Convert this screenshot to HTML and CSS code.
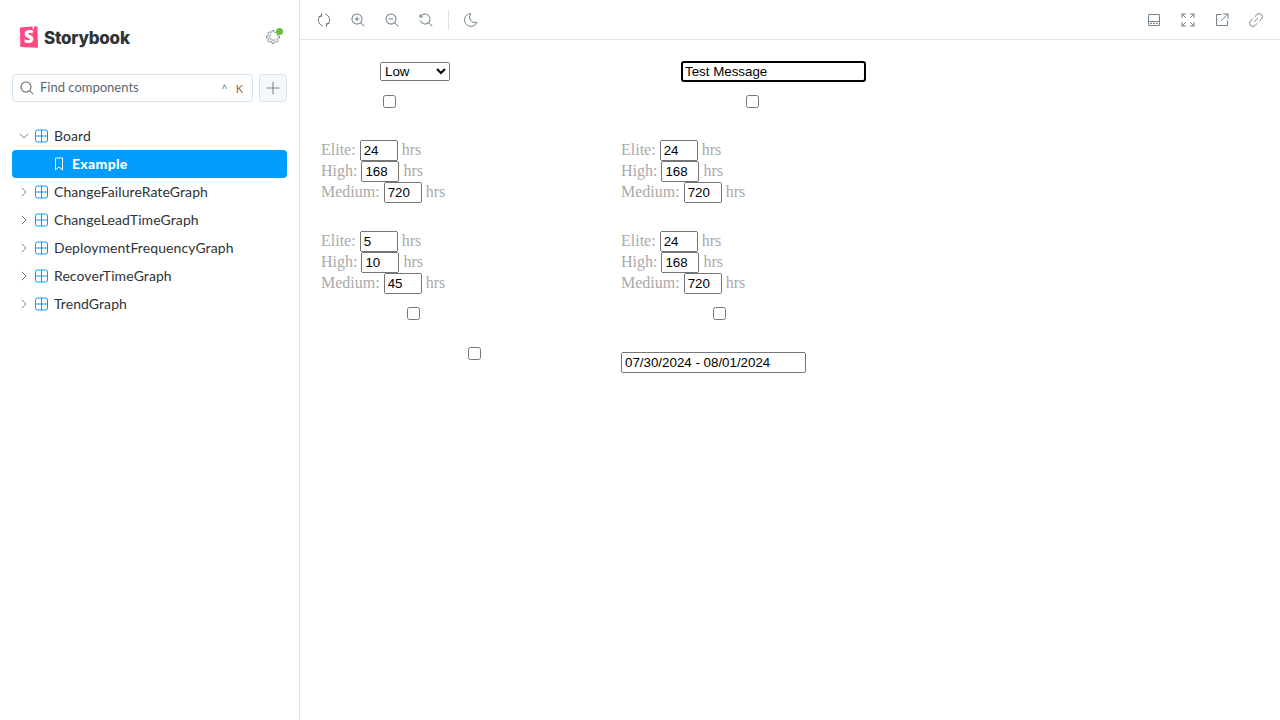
FILE: index.html
```html
<!DOCTYPE html>
<html>
<head>
<meta charset="utf-8"/>
<title>Board - Example</title>
<link rel="stylesheet" href="styles.css">
</head>
<body>
<div class="app">
  <aside class="sidebar">
    <div class="brand">
      <svg class="logo" width="18" height="22" viewBox="0 0 18 22">
        <path fill="#ff4785" d="M0 1.400 L12.600 .6 L12.500 3 L14 2.400 L14.200 .5 L17.400 .3 L18 20.800 Q18 21.800 17 21.800 L1.300 21 Q.4 21 .3 20.200 Z"/>
        <text x="9" y="17" class="logo-s">S</text>
      </svg>
      <span class="wordmark">Storybook</span>
      <span class="cog">
        <svg width="14" height="14" viewBox="0 0 14 14" fill="none" stroke="#73828c" stroke-width=".9" stroke-linejoin="round">
          <path d="M5.790 2.150 5.980 .58 8.020 .58 8.210 2.150 9.580 2.710 10.820 1.740 12.260 3.180 11.290 4.420 11.850 5.790 13.420 5.980 13.420 8.020 11.850 8.210 11.290 9.580 12.260 10.820 10.820 12.260 9.580 11.290 8.210 11.850 8.020 13.420 5.980 13.420 5.790 11.850 4.420 11.290 3.180 12.260 1.740 10.820 2.710 9.580 2.150 8.210 .58 8.020 .58 5.980 2.150 5.790 2.710 4.420 1.740 3.180 3.180 1.740 4.420 2.710Z"/>
          <path d="M5 4.500a3.200 3.200 0 1 0 4.500 4.500"/>
        </svg>
        <i class="dot"></i>
      </span>
    </div>

    <div class="search-row">
      <div class="search">
        <svg width="14" height="14" viewBox="0 0 14 14" fill="#5c6870"><path d="M9.544 10.206a5.500 5.500 0 11.662-.662.5.5 0 01.148.102l3 3a.5.5 0 01-.708.708l-3-3a.5.5 0 01-.102-.148zM10.500 6a4.500 4.500 0 10-9 0 4.500 4.500 0 009 0z"/></svg>
        <span class="search-text">Find components</span>
        <span class="keys"><span>^</span><span class="key-k">K</span></span>
      </div>
      <div class="add">
        <svg width="14" height="14" viewBox="0 0 14 14" fill="#73828c"><path d="M7 .5a.5.5 0 0 1 .5.5v5.500H13a.5.5 0 0 1 0 1H7.500V13a.5.5 0 0 1-1 0V7.500H1a.5.5 0 0 1 0-1h5.500V1A.5.5 0 0 1 7 .5z"/></svg>
      </div>
    </div>

    <ul class="tree">
      <li class="node">
        <svg class="chev" width="10" height="10" viewBox="0 0 10 10"><path d="M1 3l4 4 4-4"/></svg>
        <svg class="comp" width="14" height="14" viewBox="0 0 14 14"><rect x="1.500" y="1" width="12" height="12" rx="2"/><path d="M7.500 1v12M1.500 7h12"/></svg>
        <span>Board</span>
      </li>
      <li class="node story">
        <svg width="14" height="14" viewBox="0 0 14 14" fill="none" stroke="#fff"><path d="M3.500 1v12L7 10l3.500 3V1z" stroke-linejoin="round"/></svg>
        <span>Example</span>
      </li>
      <li class="node">
        <svg class="chev" width="10" height="10" viewBox="0 0 10 10"><path d="M3 1l4 4-4 4"/></svg>
        <svg class="comp" width="14" height="14" viewBox="0 0 14 14"><rect x="1.500" y="1" width="12" height="12" rx="2"/><path d="M7.500 1v12M1.500 7h12"/></svg>
        <span>ChangeFailureRateGraph</span>
      </li>
      <li class="node">
        <svg class="chev" width="10" height="10" viewBox="0 0 10 10"><path d="M3 1l4 4-4 4"/></svg>
        <svg class="comp" width="14" height="14" viewBox="0 0 14 14"><rect x="1.500" y="1" width="12" height="12" rx="2"/><path d="M7.500 1v12M1.500 7h12"/></svg>
        <span>ChangeLeadTimeGraph</span>
      </li>
      <li class="node">
        <svg class="chev" width="10" height="10" viewBox="0 0 10 10"><path d="M3 1l4 4-4 4"/></svg>
        <svg class="comp" width="14" height="14" viewBox="0 0 14 14"><rect x="1.500" y="1" width="12" height="12" rx="2"/><path d="M7.500 1v12M1.500 7h12"/></svg>
        <span>DeploymentFrequencyGraph</span>
      </li>
      <li class="node">
        <svg class="chev" width="10" height="10" viewBox="0 0 10 10"><path d="M3 1l4 4-4 4"/></svg>
        <svg class="comp" width="14" height="14" viewBox="0 0 14 14"><rect x="1.500" y="1" width="12" height="12" rx="2"/><path d="M7.500 1v12M1.500 7h12"/></svg>
        <span>RecoverTimeGraph</span>
      </li>
      <li class="node">
        <svg class="chev" width="10" height="10" viewBox="0 0 10 10"><path d="M3 1l4 4-4 4"/></svg>
        <svg class="comp" width="14" height="14" viewBox="0 0 14 14"><rect x="1.500" y="1" width="12" height="12" rx="2"/><path d="M7.500 1v12M1.500 7h12"/></svg>
        <span>TrendGraph</span>
      </li>
    </ul>
  </aside>

  <main class="main">
    <div class="toolbar">
      <div class="tools">
        <svg width="14" height="14" viewBox="0 0 14 14" fill="none" stroke="#73828c" stroke-linecap="round" stroke-linejoin="round"><path d="M5.500 12.900A6 6 0 0 1 3.400 2.600M4.500 .8V3.500H1.800M8.500 1.100A6 6 0 0 1 10.600 11.400M9.500 13.200V10.500H12.200"/></svg>
        <svg width="14" height="14" viewBox="0 0 14 14" fill="#73828c"><path d="M6 3.500a.5.5 0 01.5.5v1.500H8a.5.5 0 010 1H6.500V8a.5.5 0 01-1 0V6.500H4a.5.5 0 010-1h1.500V4a.5.5 0 01.5-.5z"/><path d="M9.544 10.206a5.500 5.500 0 11.662-.662.5.5 0 01.148.102l3 3a.5.5 0 01-.708.708l-3-3a.5.5 0 01-.102-.148zM10.500 6a4.500 4.500 0 10-9 0 4.500 4.500 0 009 0z"/></svg>
        <svg width="14" height="14" viewBox="0 0 14 14" fill="#73828c"><path d="M4 5.500a.5.5 0 000 1h4a.5.5 0 000-1H4z"/><path d="M9.544 10.206a5.500 5.500 0 11.662-.662.5.5 0 01.148.102l3 3a.5.5 0 01-.708.708l-3-3a.5.5 0 01-.102-.148zM10.500 6a4.500 4.500 0 10-9 0 4.500 4.500 0 009 0z"/></svg>
        <svg width="14" height="14" viewBox="0 0 14 14" fill="#73828c"><path d="M1.500 2.837V1.500a.5.5 0 00-1 0V4a.5.5 0 00.5.5h2.500a.5.5 0 000-1H2.258a4.500 4.500 0 11-.496 4.016.5.5 0 10-.942.337 5.502 5.502 0 008.724 2.353.5.5 0 00.102.148l3 3a.5.5 0 00.708-.708l-3-3a.5.5 0 00-.148-.102A5.500 5.500 0 101.500 2.837z"/></svg>
        <i class="sep"></i>
        <svg width="14" height="14" viewBox="0 0 14 14" fill="none" stroke="#73828c" stroke-linejoin="round"><path d="M6.800 .6A6.400 6.400 0 1 0 12.900 9.300 5.500 5.500 0 0 1 6.800 .6z"/></svg>
      </div>
      <div class="tools tools-right">
        <svg width="14" height="14" viewBox="0 0 14 14" fill="none" stroke="#73828c"><rect x="1.500" y="1.500" width="11" height="11" rx=".5"/><path d="M1.500 8.500h11"/><path d="M3 10.500h8" stroke-dasharray="2 1"/></svg>
        <svg width="14" height="14" viewBox="0 0 14 14" fill="none" stroke="#73828c" stroke-linecap="round"><path d="M1 4.500V1h3.500M1 1l3.500 3.500M13 4.500V1H9.500M13 1L9.500 4.500M1 9.500V13h3.500M1 13l3.500-3.500M13 9.500V13H9.500M13 13L9.500 9.500"/></svg>
        <svg width="14" height="14" viewBox="0 0 14 14" fill="none" stroke="#73828c" stroke-linecap="round"><path d="M6 1.500H1.500v11h11V8M8.500 1H13V5.500M13 1L6.500 7.500"/></svg>
        <svg width="14" height="14" viewBox="0 0 14 14" fill="none" stroke="#73828c"><path d="M6 3.500l2-2a2.800 2.800 0 0 1 4.500 4.500l-2 2M8 10.500l-2 2a2.800 2.800 0 0 1-4.500-4.500l2-2M5.500 8.500l3-3" stroke-linecap="round"/></svg>
      </div>
    </div>

    <div class="canvas">
      <div class="cell">
        <select class="level"><option>Low</option></select>
        <input class="check check-a" type="checkbox">
      </div>
      <div class="cell">
        <input class="message" type="text" value="Test Message">
        <input class="check check-b" type="checkbox">
      </div>

      <div class="limits">
        <div>Elite: <input type="text" value="24"> hrs</div>
        <div>High: <input type="text" value="168"> hrs</div>
        <div>Medium: <input type="text" value="720"> hrs</div>
      </div>
      <div class="limits">
        <div>Elite: <input type="text" value="24"> hrs</div>
        <div>High: <input type="text" value="168"> hrs</div>
        <div>Medium: <input type="text" value="720"> hrs</div>
      </div>

      <div class="limits">
        <div>Elite: <input type="text" value="5"> hrs</div>
        <div>High: <input type="text" value="10"> hrs</div>
        <div>Medium: <input type="text" value="45"> hrs</div>
      </div>
      <div class="limits">
        <div>Elite: <input type="text" value="24"> hrs</div>
        <div>High: <input type="text" value="168"> hrs</div>
        <div>Medium: <input type="text" value="720"> hrs</div>
      </div>

      <div class="cell"><input class="check check-c" type="checkbox"></div>
      <div class="cell"><input class="check check-d" type="checkbox"></div>

      <div class="cell"><input class="check check-e" type="checkbox"></div>
      <div class="cell"><input class="dates" type="text" value="07/30/2024 - 08/01/2024"></div>
    </div>
  </main>
</div>
</body>
</html>
```
FILE: styles.css
```css
html, body {
  margin: 0;
  height: 100%;
  background: #fff;
}

.app {
  display: flex;
  height: 720px;
  overflow: hidden;
}

/* sidebar */
.sidebar {
  box-sizing: border-box;
  width: 300px;
  flex: none;
  border-right: 1px solid #e0e3e5;
  padding: 0 12px;
  font-family: "Lato", sans-serif;
  color: #2e3438;
}

.brand {
  display: flex;
  align-items: center;
  height: 22px;
  padding: 26px 7px 26px 8px;
}

.logo-s {
  font-family: "Open Sans", sans-serif;
  font-weight: 800;
  font-size: 17px;
  fill: #fff;
  text-anchor: middle;
}

.wordmark {
  margin-left: 6px;
  padding-top: 2px;
  font-family: "Inter", sans-serif;
  font-weight: 800;
  font-size: 17px;
  letter-spacing: -0.25px;
  color: #2e3438;
}

.cog {
  position: relative;
  display: flex;
  margin-left: auto;
}

.dot {
  position: absolute;
  top: -2px;
  right: -3px;
  width: 7px;
  height: 7px;
  border-radius: 50%;
  background: #66bf3c;
}

.search-row {
  display: flex;
  gap: 6px;
  margin-bottom: 20px;
}

.search {
  box-sizing: border-box;
  display: flex;
  align-items: center;
  width: 241px;
  height: 28px;
  padding: 0 7px;
  border: 1px solid #d4e3f0;
  border-radius: 4px;
  font-size: 13px;
  color: #5c6870;
}

.search-text {
  margin-left: 6px;
  padding-bottom: 2px;
}

.keys {
  display: flex;
  gap: 8px;
  margin-left: auto;
  font-size: 11px;
  padding-right: 2px;
  color: #73828c;
}

.key-k {
  color: #8a6d55;
}

.add {
  box-sizing: border-box;
  display: flex;
  align-items: center;
  justify-content: center;
  width: 28px;
  height: 28px;
  border: 1px solid #d4e3f0;
  border-radius: 4px;
  background: #f4f8fb;
}

.tree {
  list-style: none;
  margin: 0;
  padding: 0;
}

.node {
  display: flex;
  align-items: center;
  height: 28px;
  padding-left: 7px;
  font-size: 14px;
  letter-spacing: 0.08px;
  white-space: nowrap;
}

.node span {
  padding-bottom: 2px;
}

.chev {
  fill: none;
  stroke: #73828c;
  stroke-linecap: round;
  stroke-linejoin: round;
  margin-right: 5px;
}

.comp {
  fill: none;
  stroke: #029cfd;
  margin-right: 6px;
}

.story {
  padding-left: 40px;
  gap: 6px;
  border-radius: 4px;
  background: #029cfd;
  color: #fff;
  font-weight: 900;
  letter-spacing: 0.3px;
}

/* toolbar */
.main {
  flex: 1;
  min-width: 0;
}

.toolbar {
  box-sizing: border-box;
  display: flex;
  justify-content: space-between;
  align-items: center;
  height: 40px;
  padding: 0 17px;
  border-bottom: 1px solid #e0e3e5;
}

.tools {
  display: flex;
  align-items: center;
  gap: 20px;
}

.sep {
  width: 1px;
  height: 20px;
  margin: 0 -5px;
  background: #e0e3e5;
}

/* story canvas */
.canvas {
  display: grid;
  grid-template-columns: 300px 300px;
  grid-template-rows: 79px 91px 76px 40px auto;
  padding: 21px 0 0 21px;
  font-family: "Liberation Serif", serif;
  font-size: 16px;
  color: #aaa;
}

.limits div {
  height: 21px;
}

.limits input {
  box-sizing: border-box;
  width: 38px;
  height: 21px;
  padding: 1px 2px;
  font: 13.333px "Liberation Sans", sans-serif;
}

.level {
  display: block;
  width: 70px;
  height: 19px;
  margin: 1px 0 0 59px;
  font: 13.333px "Liberation Sans", sans-serif;
}

.message {
  display: block;
  box-sizing: border-box;
  width: 185px;
  height: 21px;
  margin-left: 60px;
  padding: 1px 2px;
  border: 2px solid #000;
  border-radius: 3px;
  outline: none;
  font: 13.333px "Liberation Sans", sans-serif;
}

.check {
  display: block;
  width: 13px;
  height: 13px;
  margin: 0;
}

.check-a { margin: 14px 0 0 62px; }
.check-b { margin: 13px 0 0 125px; }
.check-c { margin: 0 0 0 86px; }
.check-d { margin: 0 0 0 92px; }
.check-e { margin: 0 0 0 147px; }

.dates {
  display: block;
  box-sizing: border-box;
  width: 185px;
  height: 21px;
  margin-top: 5px;
  padding: 1px 2px;
  font: 13.333px "Liberation Sans", sans-serif;
}
```
